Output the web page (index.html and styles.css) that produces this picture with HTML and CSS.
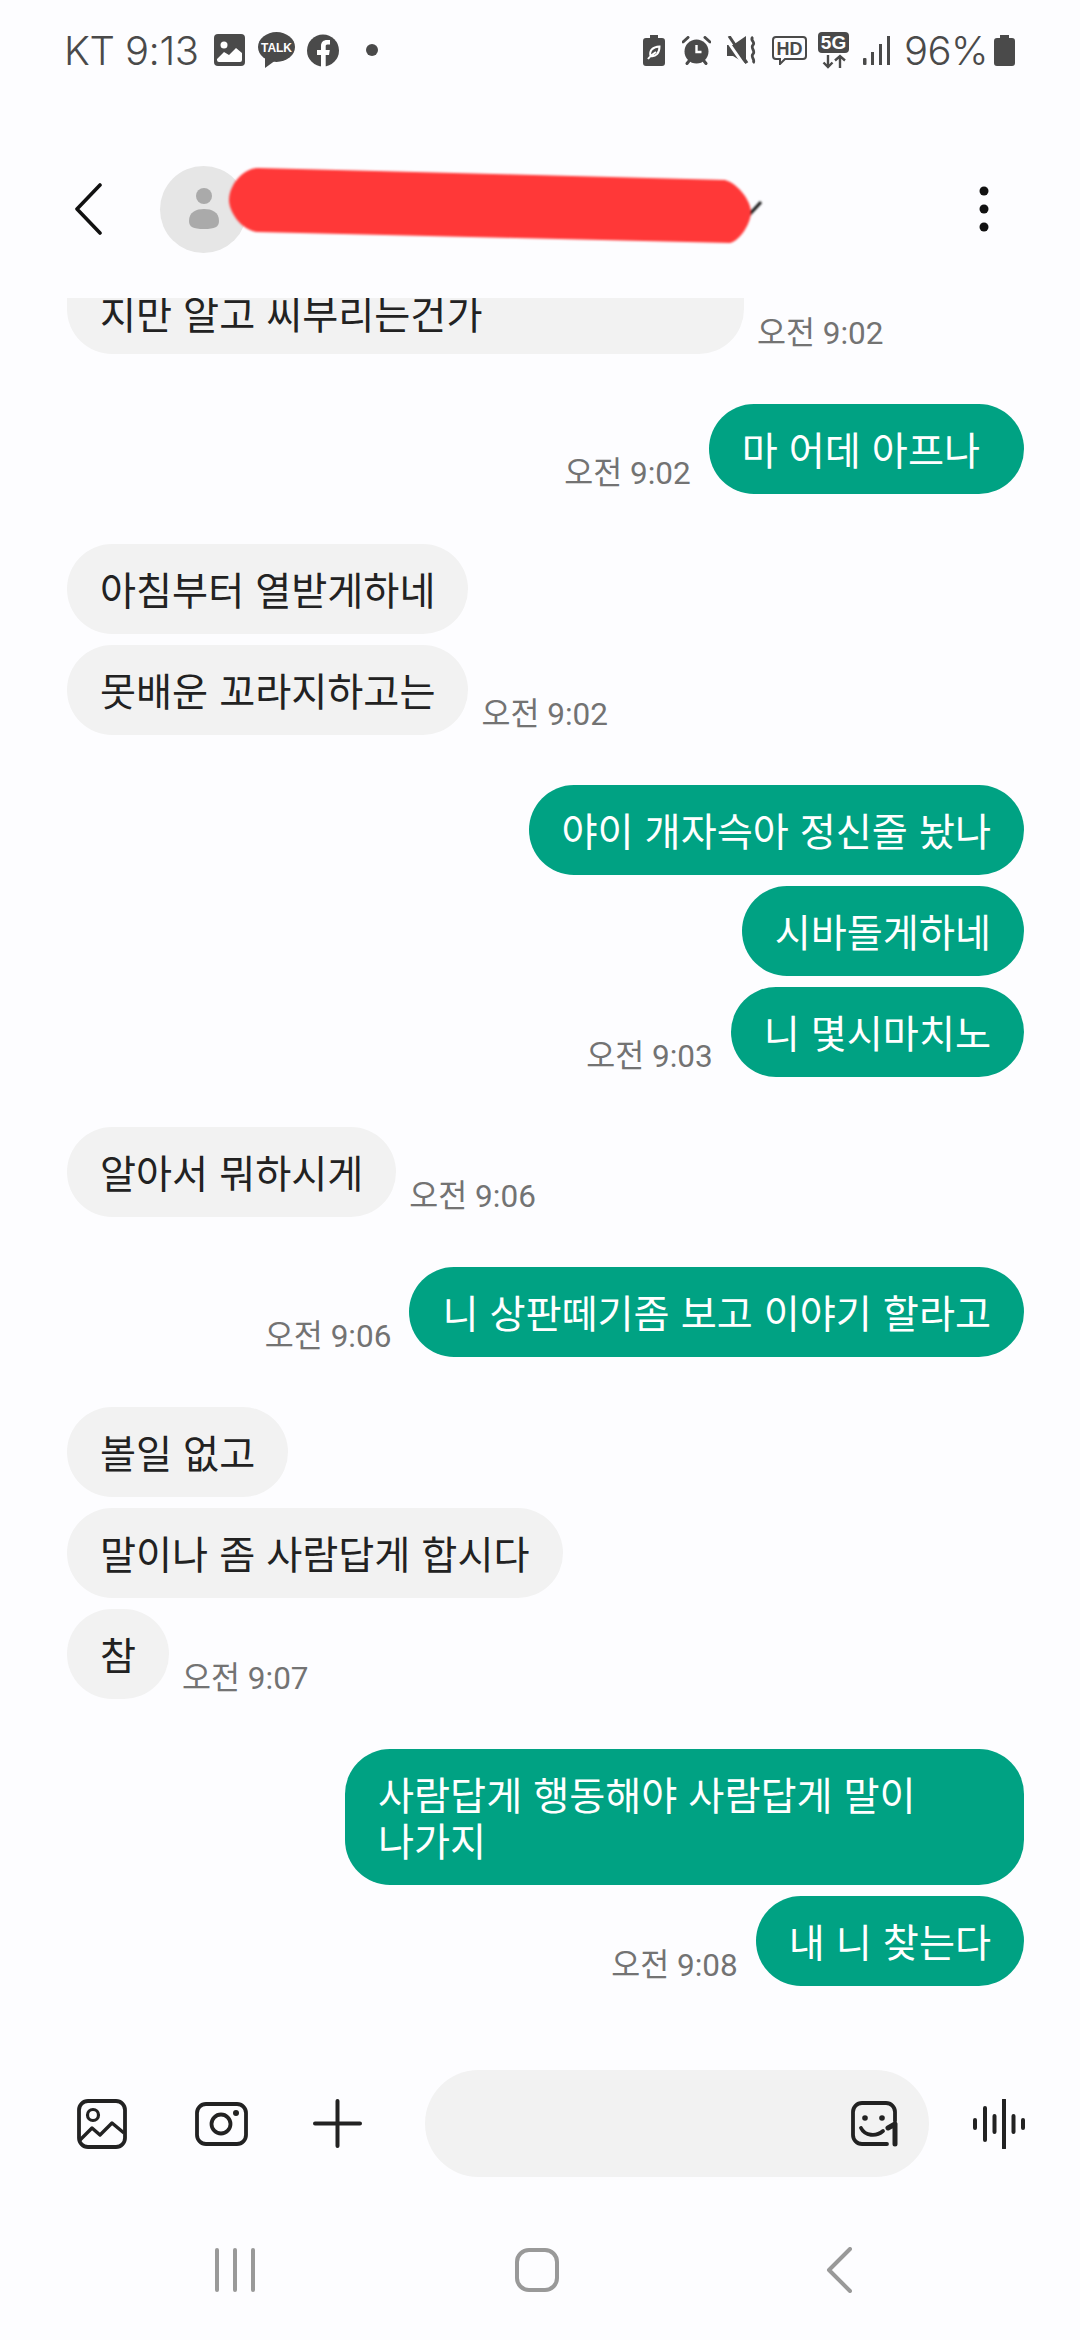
FILE: index.html
```html
<!DOCTYPE html>
<html lang="ko">

<head>
    <meta charset="UTF-8">
    <meta name="viewport" content="width=device-width, initial-scale=1.0">
    <title>메시지</title>

    <link rel="stylesheet" href="styles.css">
</head>

<body>
    <div class="page">
        <!-- status bar -->
        <div class="status">
            <span class="statusText">KT 9:13</span>
            <svg class="sIcon gapImage" width="31" height="32" viewBox="0 0 31 32">
                <rect width="31" height="32" rx="4" fill="#4a4a4a" />
                <circle cx="10" cy="11" r="3.5" fill="#fff" />
                <path d="M3 25 L10 18 L15 21 L22 14 L28 19 V26 a2 2 0 0 1 -2 2 H5 a2 2 0 0 1 -2 -2 Z" fill="#fff" />
            </svg>
            <svg class="sIcon gapTalk" width="37" height="36" viewBox="0 0 37 36">
                <ellipse cx="18.5" cy="15" rx="18.5" ry="15" fill="#4a4a4a" />
                <path d="M7 24 L7 36 L18 28 Z" fill="#4a4a4a" />
                <text x="18.5" y="19.5" class="talkText" text-anchor="middle">TALK</text>
            </svg>
            <svg class="sIcon gapFb" width="32" height="33" viewBox="0 0 32 33">
                <circle cx="16" cy="16.500" r="16" fill="#4a4a4a" />
                <path d="M14 33 V21 H10 V16 H14 V12 C14 8 16.500 6 20 6 H23 V10.500 H20.500 C19 10.500 18.700 11.300 18.700 12.500 V16 H22.800 L22 21 H18.700 V33 Z" fill="#fff" />
            </svg>
            <span class="statusDot"></span>

            <svg class="sIcon gapSaver" width="22" height="31" viewBox="0 0 22 31">
                <path d="M7 0 H15 V3 H19 a3 3 0 0 1 3 3 V28 a3 3 0 0 1 -3 3 H3 a3 3 0 0 1 -3 -3 V6 a3 3 0 0 1 3 -3 H7 Z" fill="#4a4a4a" />
                <path d="M5 24 C7 21 10 19 13 17 M7.500 21 C6 15 10 12 16.500 11.500 C16.500 18 13 22 7.500 21 Z" fill="none" stroke="#fff" stroke-width="2" />
            </svg>
            <svg class="sIcon gapAlarm" width="29" height="29" viewBox="0 0 29 29">
                <circle cx="14.500" cy="15.500" r="12" fill="#4a4a4a" />
                <path d="M1 6 L6 1.500 M28 6 L23 1.500 M5 27.500 L7 25 M24 27.500 L22 25" stroke="#4a4a4a" stroke-width="3" stroke-linecap="round" />
                <path d="M14.500 9 V16 H19.500" fill="none" stroke="#fff" stroke-width="2.400" />
            </svg>
            <svg class="sIcon gapMute" width="30" height="28" viewBox="0 0 30 28">
                <path d="M0 9 H6 L19 0 V28 L6 20 H0 Z" fill="#4a4a4a" />
                <path d="M-1 3 L17 29" stroke="#fdfdff" stroke-width="3" />
                <path d="M2 0 L20 27" stroke="#4a4a4a" stroke-width="3" />
                <path d="M26 1 C22 4 29 6 26 9 C23 12 29 15 26 18 C23 21 29 24 26 27" fill="none" stroke="#4a4a4a" stroke-width="2.800" />
            </svg>
            <svg class="sIcon gapHd" width="35" height="29" viewBox="0 0 35 29">
                <path d="M4 1 H31 a3 3 0 0 1 3 3 V20 a3 3 0 0 1 -3 3 H13 L8 28 V23 H4 a3 3 0 0 1 -3 -3 V4 a3 3 0 0 1 3 -3 Z" fill="none" stroke="#4a4a4a" stroke-width="2" />
                <text x="17.500" y="18.500" class="hdText" text-anchor="middle">HD</text>
            </svg>
            <svg class="sIcon gap5g" width="31" height="37" viewBox="0 0 31 37">
                <rect width="31" height="21" rx="4" fill="#4a4a4a" />
                <text x="15.500" y="17" class="fiveText" text-anchor="middle">5G</text>
                <path d="M10 23 V35 M5.500 30.500 L10 35 L14.500 30.500 M22 36 V24 M17 28.500 L22 24 L27 28.500" fill="none" stroke="#4a4a4a" stroke-width="2.400" />
            </svg>
            <svg class="sIcon gapSignal" width="27" height="29" viewBox="0 0 27 29">
                <rect x="0" y="22" width="3.500" height="7" rx="1" fill="#4a4a4a" />
                <rect x="8" y="16" width="3" height="13" fill="#4a4a4a" />
                <rect x="16" y="8" width="3" height="21" fill="#4a4a4a" />
                <rect x="24" y="0" width="3" height="29" fill="#4a4a4a" />
            </svg>
            <span class="statusText gapPct">96%</span>
            <svg class="sIcon gapBattery" width="21" height="31" viewBox="0 0 21 31">
                <path d="M6 0 H15 V3 H18 a3 3 0 0 1 3 3 V28 a3 3 0 0 1 -3 3 H3 a3 3 0 0 1 -3 -3 V6 a3 3 0 0 1 3 -3 H6 Z" fill="#4a4a4a" />
            </svg>
        </div>

        <!-- header -->
        <div class="header">
            <svg class="backBtn" width="30" height="52" viewBox="0 0 30 52">
                <path d="M28 2 L5 26 L28 50" fill="none" stroke="#111" stroke-width="3.600" stroke-linecap="round" stroke-linejoin="round" />
            </svg>
            <div class="avatar">
                <svg width="32" height="42" viewBox="0 0 32 42">
                    <circle cx="16" cy="8" r="8" fill="#aaa" />
                    <path d="M1 33 C1 24 8 21 16 21 C24 21 31 24 31 33 C31 39 27 41 16 41 C5 41 1 39 1 33 Z" fill="#aaa" />
                </svg>
            </div>
            <svg class="kebab" width="10" height="46" viewBox="0 0 10 46">
                <circle cx="5" cy="5" r="4.500" fill="#111" />
                <circle cx="5" cy="23" r="4.500" fill="#111" />
                <circle cx="5" cy="41" r="4.500" fill="#111" />
            </svg>
            <!-- 名字被塗掉 -->
            <svg class="scribble" width="545" height="90" viewBox="0 0 545 90">
                <path d="M512 42 L524 55 L536 42" fill="none" stroke="#111" stroke-width="3" />
                <path d="M33 8 L500 20 C514 24 526 42 526 52 C526 62 516 80 505 83 L32 72 C16 70 4 52 4 40 C4 25 18 8 33 8 Z" fill="#ff3838" />
            </svg>
        </div>

        <!-- messages -->
        <div class="list">
            <div class="row">
                <div class="bubble recv cut">지만 알고 씨부리는건가</div>
                <span class="time timeRecv">오전 9:02</span>
            </div>

            <div class="row sent newGroup">
                <span class="time timeSent">오전 9:02</span>
                <div class="bubble mine">마 어데 아프나&nbsp;</div>
            </div>

            <div class="row newGroup">
                <div class="bubble recv">아침부터 열받게하네</div>
            </div>
            <div class="row">
                <div class="bubble recv">못배운 꼬라지하고는</div>
                <span class="time timeRecv">오전 9:02</span>
            </div>

            <div class="row sent newGroup">
                <div class="bubble mine">야이 개자슥아 정신줄 놨나</div>
            </div>
            <div class="row sent">
                <div class="bubble mine">시바돌게하네</div>
            </div>
            <div class="row sent">
                <span class="time timeSent">오전 9:03</span>
                <div class="bubble mine">니 몇시마치노</div>
            </div>

            <div class="row newGroup">
                <div class="bubble recv">알아서 뭐하시게</div>
                <span class="time timeRecv">오전 9:06</span>
            </div>

            <div class="row sent newGroup">
                <span class="time timeSent">오전 9:06</span>
                <div class="bubble mine">니 상판떼기좀 보고 이야기 할라고</div>
            </div>

            <div class="row newGroup">
                <div class="bubble recv">볼일 없고</div>
            </div>
            <div class="row">
                <div class="bubble recv">말이나 좀 사람답게 합시다</div>
            </div>
            <div class="row">
                <div class="bubble recv">참</div>
                <span class="time timeRecv">오전 9:07</span>
            </div>

            <div class="row sent newGroup">
                <div class="bubble mine wide">사람답게 행동해야 사람답게 말이 나가지</div>
            </div>
            <div class="row sent">
                <span class="time timeSent">오전 9:08</span>
                <div class="bubble mine">내 니 찾는다</div>
            </div>
        </div>

        <!-- input bar -->
        <div class="inputBar">
            <svg class="galleryBtn" width="50" height="50" viewBox="0 0 50 50">
                <rect x="2" y="2" width="46" height="46" rx="9" fill="none" stroke="#222" stroke-width="3.800" />
                <circle cx="16" cy="16" r="5.500" fill="none" stroke="#222" stroke-width="3.200" />
                <path d="M3 41 L15 29 L23 36 L35 24 L47 34" fill="none" stroke="#222" stroke-width="3.400" stroke-linejoin="round" />
            </svg>
            <svg class="cameraBtn" width="53" height="44" viewBox="0 0 53 44">
                <rect x="2" y="2" width="49" height="40" rx="9" fill="none" stroke="#222" stroke-width="3.800" />
                <circle cx="26" cy="22" r="9.500" fill="none" stroke="#222" stroke-width="3.800" />
                <circle cx="41" cy="11" r="3" fill="#222" />
            </svg>
            <svg class="plusBtn" width="49" height="49" viewBox="0 0 49 49">
                <path d="M24.500 2 V47 M2 24.500 H47" stroke="#222" stroke-width="4" stroke-linecap="round" />
            </svg>
            <div class="inputPill">
                <svg width="48" height="46" viewBox="0 0 48 46">
                    <path d="M44 20 V11 a9 9 0 0 0 -9 -9 H11 a9 9 0 0 0 -9 9 V34 a9 9 0 0 0 9 9 H36" fill="none" stroke="#222" stroke-width="3.800" stroke-linecap="round" />
                    <circle cx="14" cy="17" r="2.800" fill="#222" />
                    <circle cx="31" cy="17" r="2.800" fill="#222" />
                    <path d="M10 27 C14 35 25 36 32 30" fill="none" stroke="#222" stroke-width="3.800" stroke-linecap="round" />
                    <path d="M37 27 L44 23 V43" fill="none" stroke="#222" stroke-width="5" stroke-linecap="round" stroke-linejoin="round" />
                </svg>
            </div>
            <svg class="voiceBtn" width="52" height="50" viewBox="0 0 52 50">
                <path d="M2 21 V29 M12 9 V41 M21.500 17 V33 M31 1 V49 M40.500 17 V33 M50 21 V29" stroke="#222" stroke-width="4" stroke-linecap="round" />
            </svg>
        </div>

        <!-- nav bar -->
        <div class="nav">
            <svg width="42" height="44" viewBox="0 0 42 44">
                <path d="M3 2 V42 M21 2 V42 M39 2 V42" stroke="#999" stroke-width="4" stroke-linecap="round" />
            </svg>
            <svg class="homeBtn" width="44" height="44" viewBox="0 0 44 44">
                <rect x="2" y="2" width="40" height="40" rx="12" fill="none" stroke="#999" stroke-width="4" />
            </svg>
            <svg width="26" height="46" viewBox="0 0 26 46">
                <path d="M24 2 L3 23 L24 44" fill="none" stroke="#999" stroke-width="4" stroke-linecap="round" stroke-linejoin="round" />
            </svg>
        </div>
    </div>
</body>

</html>
```

FILE: styles.css
```css
* {
    box-sizing: border-box;
}

body {
    margin: 0;
    background-color: #fdfdff;
    font-family: "Noto Sans CJK KR", "Noto Sans", sans-serif;
}

.page {
    width: 1080px;
    height: 2340px;
    display: flex;
    flex-direction: column;
    overflow: hidden;
}

/* status bar */
.status {
    height: 100px;
    flex: none;
    display: flex;
    align-items: center;
    padding-left: 64px;
}

.statusText {
    font-family: Inter, sans-serif;
    font-size: 40px;
    font-weight: 300;
    letter-spacing: -0.5px;
    color: #4a4a4a;
}

.sIcon {
    flex: none;
}

.gapImage { margin-left: 16px; }
.gapTalk { margin-left: 13px; }
.gapFb { margin-left: 12px; }

.statusDot {
    width: 12px;
    height: 12px;
    margin-left: 27px;
    border-radius: 50%;
    background-color: #4a4a4a;
}

.gapSaver { margin-left: auto; }
.gapAlarm { margin-left: 17px; }
.gapMute { margin-left: 16px; }
.gapHd { margin-left: 15px; }
.gap5g { margin-left: 11px; }
.gapSignal { margin-left: 14px; }
.gapPct { margin-left: 14px; }
.gapBattery { margin-left: 6px; margin-right: 65px; }

.talkText {
    font-family: "Liberation Sans", sans-serif;
    font-size: 12px;
    font-weight: 700;
    fill: #fff;
}

.hdText {
    font-family: "Liberation Sans", sans-serif;
    font-size: 18px;
    font-weight: 700;
    fill: #4a4a4a;
}

.fiveText {
    font-family: "Liberation Sans", sans-serif;
    font-size: 19px;
    font-weight: 700;
    fill: #fff;
}

/* header */
.header {
    position: relative;
    height: 198px;
    flex: none;
    display: flex;
    align-items: center;
    padding: 20px 91px 0 72px;
}

.avatar {
    width: 87px;
    height: 87px;
    margin-left: 58px;
    display: flex;
    align-items: center;
    justify-content: center;
    border-radius: 50%;
    background-color: #e6e6e6;
}

.kebab {
    margin-left: auto;
}

.scribble {
    position: absolute;
    left: 225px;
    top: 60px;
    filter: blur(0.8px);
}

/* messages */
.list {
    flex: 1;
    min-height: 0;
    display: flex;
    flex-direction: column;
    justify-content: flex-end;
    gap: 11px;
    padding: 0 56px 54px 67px;
    overflow: hidden;
}

.row {
    flex: none;
    display: flex;
    align-items: flex-end;
}

.sent {
    justify-content: flex-end;
}

.newGroup {
    margin-top: 39px;
}

.bubble {
    padding: 21px 33px 23px;
    border-radius: 45px;
    font-size: 39.2px;
    line-height: 46px;
    word-break: keep-all;
}

.recv {
    background-color: #f2f2f2;
    color: #222;
}

.mine {
    background-color: #00a283;
    color: #fff;
}

.cut {
    width: 677px;
    height: 136px;
    display: flex;
    align-items: flex-end;
    padding-bottom: 19px;
}

.wide {
    width: 679px;
}

.time {
    padding-bottom: 2px;
    font-family: Roboto, "Noto Sans CJK KR", sans-serif;
    font-size: 31.5px;
    line-height: 36px;
    color: #737373;
    white-space: nowrap;
}

.timeRecv {
    margin-left: 13px;
}

.timeSent {
    margin-right: 18px;
}

/* input bar */
.inputBar {
    height: 160px;
    flex: none;
    display: flex;
    align-items: center;
    padding: 30px 0 23px 77px;
}

.cameraBtn { margin-left: 68px; }
.plusBtn { margin-left: 65px; }
.voiceBtn { margin-left: 44px; }

.inputPill {
    width: 504px;
    height: 107px;
    margin-left: 63px;
    display: flex;
    align-items: center;
    justify-content: flex-end;
    padding-right: 30px;
    border-radius: 54px;
    background-color: #f2f2f2;
}

/* nav bar */
.nav {
    height: 140px;
    flex: none;
    display: flex;
    align-items: center;
    justify-content: space-between;
    padding: 0 228px 0 214px;
}

.homeBtn {
    margin-right: 9px;
}
```
